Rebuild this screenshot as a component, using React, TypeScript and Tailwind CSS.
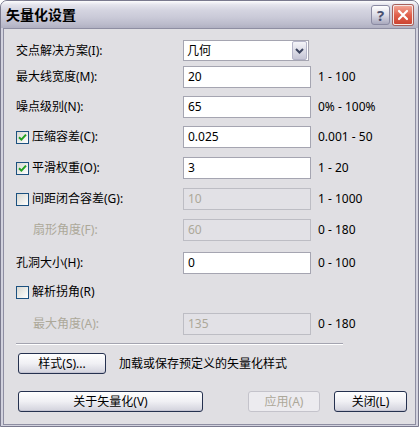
import React from "react";

type RowProps = {
  label: string;
  value?: string;
  range?: string;
  check?: boolean;
  disabled?: boolean;
  grayLabel?: boolean;
  indent?: boolean;
  className?: string;
};

function CheckBox({ checked }: { checked: boolean }) {
  return (
    <span className="w-[13px] h-[13px] shrink-0 border border-[#1c5180] bg-gradient-to-br from-[#d8d8d2] to-white flex items-center justify-center">
      {checked && (
        <svg width="9" height="9" viewBox="0 0 9 9">
          <path d="M1 4.2 L3.4 6.6 L8 1.6" stroke="#21a121" strokeWidth="2" fill="none" />
        </svg>
      )}
    </span>
  );
}

function Row({ label, value, range, check, disabled, grayLabel, indent, className }: RowProps) {
  return (
    <div className={`flex items-center h-[22px] ${className ?? ""}`}>
      <div className={`w-[167px] flex items-center ${indent ? "pl-[17px]" : ""}`}>
        {check !== undefined && <CheckBox checked={check} />}
        <span className={`${check !== undefined ? "ml-[3px]" : ""} ${grayLabel ? "text-[#aca899]" : "text-black"}`}>
          {label}
        </span>
      </div>
      {value !== undefined && (
        <div
          className={`w-[128px] h-[22px] border px-[4px] flex items-center ${
            disabled ? "bg-[#e2e1e6] border-[#bdbdc4] text-[#aca899]" : "bg-white border-[#a5a5b1] text-black"
          }`}
        >
          {value}
        </div>
      )}
      {range && <span className="ml-[7px] text-black">{range}</span>}
    </div>
  );
}

function XpButton({ children, className, disabled }: { children: React.ReactNode; className?: string; disabled?: boolean }) {
  return (
    <div
      className={`h-[21px] rounded-[3px] border flex items-center justify-center ${
        disabled
          ? "border-[#c4c3cb] bg-[#ecebef] text-[#aca899]"
          : "border-[#25314f] bg-gradient-to-b from-white via-[#f0f0f4] to-[#d2d2dc] text-black shadow-[inset_0_-1px_0_#c4c4d2]"
      } ${className ?? ""}`}
    >
      {children}
    </div>
  );
}

export default function App() {
  return (
    <div className="w-[419px] h-[427px] flex flex-col rounded-t-[7px] border border-[#7a7a8e] bg-[#d2d2de] overflow-hidden font-['Noto_Sans','Noto_Sans_CJK_SC',sans-serif] text-[12px] leading-none">
      {/* Title bar */}
      <div className="h-[27px] shrink-0 flex items-center pl-[5px] pr-[5px] bg-[linear-gradient(to_bottom,#fdfdfd_0%,#e4e4ec_14%,#d4d4e0_35%,#cacad8_60%,#bcbccc_85%,#b0b0c2_100%)]">
        <span className="font-bold text-[14px] text-black">矢量化设置</span>
        <div className="ml-auto flex items-center gap-[3px] mt-[1px]">
          <div className="w-[19px] h-[20px] rounded-[3px] border border-[#8a8aa2] bg-gradient-to-b from-[#ffffff] via-[#dcdce6] to-[#a9a9be] flex items-center justify-center">
            <span className="text-[15px] font-bold text-[#4a5070] leading-none">?</span>
          </div>
          <div className="w-[20px] h-[20px] rounded-[2px] border border-[#f4e8e6] bg-gradient-to-b from-[#f2a494] via-[#e0604c] to-[#cc4432] flex items-center justify-center shadow-[0_0_0_1px_#a8605a]">
            <svg width="12" height="12" viewBox="0 0 12 12">
              <path d="M2 2 L10 10 M10 2 L2 10" stroke="white" strokeWidth="2.2" strokeLinecap="round" />
            </svg>
          </div>
        </div>
      </div>

      {/* Body */}
      <div className="flex-1 mx-[2px] mb-[1px] border border-[#8e8ea2] bg-[#e0dfe3] pt-[11px] pl-[12px] flex flex-col">
        {/* Combo row */}
        <div className="flex items-center h-[21px]">
          <div className="w-[167px]">交点解决方案(I):</div>
          <div className="w-[126px] h-[21px] border border-[#a5a5b1] bg-white flex items-center">
            <span className="pl-[3px] flex-1">几何</span>
            <div className="w-[15px] h-[19px] mr-[1px] rounded-[2px] border border-[#b4b4c8] bg-gradient-to-b from-[#f4f4f8] to-[#c6c6d6] flex items-center justify-center">
              <svg width="9" height="6" viewBox="0 0 9 6">
                <path d="M1 1 L4.5 4.5 L8 1" stroke="#3d4560" strokeWidth="2" fill="none" />
              </svg>
            </div>
          </div>
        </div>

        <Row className="mt-[5px]" label="最大线宽度(M):" value="20" range="1 - 100" />
        <Row className="mt-[8px]" label="噪点级别(N):" value="65" range="0% - 100%" />
        <Row className="mt-[8px]" label="压缩容差(C):" check={true} value="0.025" range="0.001 - 50" />
        <Row className="mt-[9px]" label="平滑权重(O):" check={true} value="3" range="1 - 20" />
        <Row className="mt-[9px]" label="间距闭合容差(G):" check={false} value="10" disabled range="1 - 1000" />
        <Row className="mt-[9px]" label="扇形角度(F):" indent grayLabel disabled value="60" range="0 - 180" />
        <Row className="mt-[11px]" label="孔洞大小(H):" value="0" range="0 - 100" />
        <Row className="mt-[7px]" label="解析拐角(R)" check={false} />
        <Row className="mt-[10px]" label="最大角度(A):" indent grayLabel disabled value="135" range="0 - 180" />

        {/* Separator */}
        <div className="mt-[8px] w-[327px] border-t border-[#a4a4b0] border-b border-b-white" />

        {/* Style row */}
        <div className="mt-[8px] flex items-center">
          <XpButton className="ml-[2px] w-[88px]">样式(S)...</XpButton>
          <span className="ml-[13px]">加载或保存预定义的矢量化样式</span>
        </div>

        {/* Bottom buttons */}
        <div className="mt-[17px] flex items-center">
          <XpButton className="ml-[2px] w-[185px]">关于矢量化(V)</XpButton>
          <XpButton className="ml-[45px] w-[72px]" disabled>
            应用(A)
          </XpButton>
          <XpButton className="ml-[14px] w-[73px]">关闭(L)</XpButton>
        </div>
      </div>
    </div>
  );
}
